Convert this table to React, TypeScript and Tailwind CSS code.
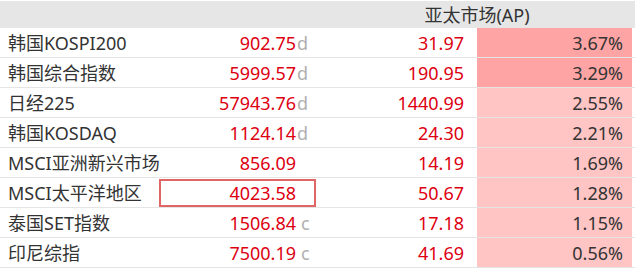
import React from "react";

type Row = {
  name: string;
  value: string;
  suffix: string;
  change: string;
  pct: string;
  strong: boolean;
  boxed?: boolean;
};

const rows: Row[] = [
  { name: "韩国KOSPI200", value: "902.75", suffix: "d", change: "31.97", pct: "3.67%", strong: true },
  { name: "韩国综合指数", value: "5999.57", suffix: "d", change: "190.95", pct: "3.29%", strong: true },
  { name: "日经225", value: "57943.76", suffix: "d", change: "1440.99", pct: "2.55%", strong: false },
  { name: "韩国KOSDAQ", value: "1124.14", suffix: "d", change: "24.30", pct: "2.21%", strong: false },
  { name: "MSCI亚洲新兴市场", value: "856.09", suffix: "", change: "14.19", pct: "1.69%", strong: false },
  { name: "MSCI太平洋地区", value: "4023.58", suffix: "", change: "50.67", pct: "1.28%", strong: false, boxed: true },
  { name: "泰国SET指数", value: "1506.84", suffix: "c", change: "17.18", pct: "1.15%", strong: false },
  { name: "印尼综指", value: "7500.19", suffix: "c", change: "41.69", pct: "0.56%", strong: false },
];

const App: React.FC = () => {
  return (
    <div
      className="w-[635px] h-[269px] bg-white pt-px text-[18px] leading-none text-[#333]"
      style={{ fontFamily: '"Noto Sans", "Noto Sans CJK SC", sans-serif' }}
    >
      {/* 表头 */}
      <div className="flex h-[27px] bg-[#e6e6e6]">
        <div className="w-[319px]" />
        <div className="w-[316px] flex items-center justify-center">亚太市场(AP)</div>
      </div>

      {rows.map((r) => (
        <div key={r.name} className="flex h-[30px] border-b border-[#e4e4e4]">
          <div className="w-[159px] pl-2 flex items-center whitespace-nowrap">{r.name}</div>
          <div
            className={`w-[157px] h-[28px] self-center flex items-center justify-end border-2 ${
              r.boxed ? "border-[#e06666]" : "border-transparent"
            }`}
          >
            <span className="text-[#dd0011]">{r.value}</span>
            <span className={`w-[18px] text-[#b0b0b0] ${r.suffix === "c" ? "pl-[5px]" : "pl-px"}`}>
              {r.suffix}
            </span>
          </div>
          <div className="w-[154px] pr-[6px] flex items-center justify-end text-[#dd0011]">{r.change}</div>
          <div className="w-[7px]" />
          <div
            className={`w-[155px] pr-[9px] flex items-center justify-end ${
              r.strong ? "bg-[#ffa4a4]" : "bg-[#ffc4c4]"
            }`}
          >
            {r.pct}
          </div>
        </div>
      ))}
    </div>
  );
};

export default App;
